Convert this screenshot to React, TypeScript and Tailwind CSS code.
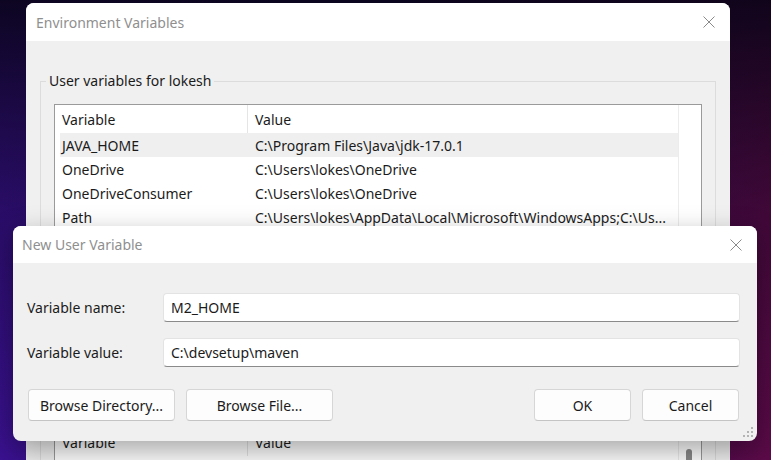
const font = { fontFamily: '"Noto Sans", "Open Sans", Arial, sans-serif' };

const userVars = [
  { name: 'JAVA_HOME', value: 'C:\\Program Files\\Java\\jdk-17.0.1', selected: true },
  { name: 'OneDrive', value: 'C:\\Users\\lokes\\OneDrive' },
  { name: 'OneDriveConsumer', value: 'C:\\Users\\lokes\\OneDrive' },
  { name: 'Path', value: 'C:\\Users\\lokes\\AppData\\Local\\Microsoft\\WindowsApps;C:\\Us...' },
];

function CloseIcon() {
  return (
    <svg width="12" height="12" viewBox="0 0 12 12" className="text-[#8a8a8a]">
      <path d="M0.5 0.5 L11.5 11.5 M11.5 0.5 L0.5 11.5" stroke="currentColor" strokeWidth="1" />
    </svg>
  );
}

function ListHeader() {
  return (
    <div className="flex h-[28px] items-center">
      <div className="flex h-full w-[193px] items-center border-r border-[#e5e5e5] pl-[7px]">Variable</div>
      <div className="pl-[7px]">Value</div>
    </div>
  );
}

function WinButton({ label, w }: { label: string; w: string }) {
  return (
    <button
      className={`${w} h-[32px] rounded-[4px] border border-[#d6d6d6] border-b-[#c4c4c4] bg-[#fdfdfd] text-[14px] text-[#1b1b1b]`}
    >
      {label}
    </button>
  );
}

function Field({ label, value }: { label: string; value: string }) {
  return (
    <div className="flex items-center">
      <label className="w-[136px] text-[14px] text-[#1b1b1b]">{label}</label>
      <div className="flex h-[29px] flex-1 items-center rounded-[4px] border border-[#e3e3e3] border-b-[#8a8a8a] bg-white pl-[7px] text-[14px] text-[#1b1b1b]">
        {value}
      </div>
    </div>
  );
}

export default function App() {
  return (
    <div
      style={font}
      className="relative h-[460px] w-[771px] overflow-hidden bg-[linear-gradient(180deg,rgba(8,4,22,0.9)_0%,rgba(8,4,22,0.35)_45%,rgba(8,4,22,0)_100%),linear-gradient(90deg,#3a1190_0%,#2c0d6a_50%,#5c0a48_100%)]"
    >
      {/* Environment Variables (back window) */}
      <div className="absolute left-[26px] top-[3px] h-[480px] w-[704px] overflow-hidden rounded-t-[8px] bg-[#f0f0f0] text-[14px] text-[#1b1b1b]">
        <div className="flex h-[38px] items-center justify-between bg-white pl-[10px] pr-[15px]">
          <span className="text-[#8f8f8f]">Environment Variables</span>
          <CloseIcon />
        </div>

        <fieldset className="mx-[14px] mt-[30px] border border-[#dcdcdc] px-[13px] pb-[12px]">
          <legend className="-ml-[8px] px-[3px] leading-[20px]">User variables for lokesh</legend>
          <div className="mt-[13px] flex h-[180px] border border-[#9a9a9a] bg-white">
            <div className="flex-1">
              <ListHeader />
              {userVars.map((v) => (
                <div
                  key={v.name}
                  className={`ml-[5px] flex h-[24px] items-center ${v.selected ? 'bg-[#efefef]' : ''}`}
                >
                  <div className="w-[188px] pl-[2px]">{v.name}</div>
                  <div className="whitespace-nowrap pl-[7px]">{v.value}</div>
                </div>
              ))}
            </div>
            <div className="w-[23px] border-l border-[#ececec]" />
          </div>
          <div className="mt-[10px] h-[28px]" />
        </fieldset>

        {/* system variables group, mostly hidden behind the dialog */}
        <div className="mx-[14px] mt-[69px] border border-[#dcdcdc] px-[13px] pb-[12px] pt-[22px]">
          <div className="flex h-[120px] border border-[#9a9a9a] bg-white">
            <div className="flex-1">
              <ListHeader />
            </div>
            <div className="w-[23px] border-l border-[#ececec] pl-[7px] pt-[21px]">
              <div className="h-[40px] w-[6px] rounded-[3px] bg-[#8a8a8a]" />
            </div>
          </div>
        </div>
      </div>

      {/* New User Variable (front window) */}
      <div className="absolute left-[13px] top-[226px] h-[215px] w-[744px] overflow-hidden rounded-[8px] bg-[#f0f0f0] shadow-[0_10px_28px_rgba(0,0,0,0.35)]">
        <div className="flex h-[37px] items-center justify-between bg-white pl-[9px] pr-[15px]">
          <span className="text-[14px] text-[#8f8f8f]">New User Variable</span>
          <CloseIcon />
        </div>
        <div className="flex flex-col gap-[16px] pl-[14px] pr-[17px] pt-[30px]">
          <Field label="Variable name:" value="M2_HOME" />
          <Field label="Variable value:" value="C:\devsetup\maven" />
        </div>
        <div className="mt-[22px] flex justify-between pl-[15px] pr-[18px]">
          <div className="flex gap-[11px]">
            <WinButton label="Browse Directory..." w="w-[147px]" />
            <WinButton label="Browse File..." w="w-[147px]" />
          </div>
          <div className="flex gap-[11px]">
            <WinButton label="OK" w="w-[97px]" />
            <WinButton label="Cancel" w="w-[97px]" />
          </div>
        </div>
        <svg width="12" height="12" viewBox="0 0 12 12" className="absolute bottom-[3px] right-[3px] text-[#b4b4b4]">
          <rect x="9" y="1" width="2" height="2" fill="currentColor" />
          <rect x="5" y="5" width="2" height="2" fill="currentColor" />
          <rect x="9" y="5" width="2" height="2" fill="currentColor" />
          <rect x="1" y="9" width="2" height="2" fill="currentColor" />
          <rect x="5" y="9" width="2" height="2" fill="currentColor" />
          <rect x="9" y="9" width="2" height="2" fill="currentColor" />
        </svg>
      </div>
    </div>
  );
}
